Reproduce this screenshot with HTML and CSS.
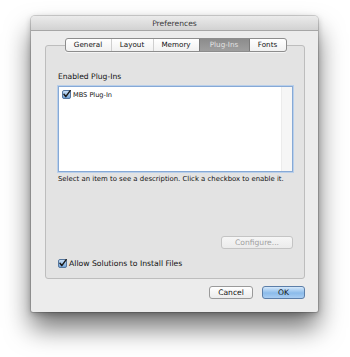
FILE: index.html
```html
<!DOCTYPE html>
<html>
<head>
<meta charset="utf-8">
<link rel="stylesheet" href="styles.css">
</head>
<body>
<div class="window">
  <div class="titlebar">Preferences</div>
  <div class="content">
    <div class="group">
      <div class="tabs">
        <div class="tab t-general">General</div>
        <div class="tab t-layout">Layout</div>
        <div class="tab t-memory">Memory</div>
        <div class="tab t-plug selected">Plug-Ins</div>
        <div class="tab t-fonts">Fonts</div>
      </div>
      <div class="label">Enabled Plug-Ins</div>
      <div class="list">
        <div class="rows">
          <div class="row">
            <svg class="cb" width="9" height="9" viewBox="0 0 9 9"><defs><linearGradient id="g1" x1="0" y1="0" x2="0" y2="1"><stop offset="0" stop-color="#cfe3f7"/><stop offset="1" stop-color="#6fa2d8"/></linearGradient></defs><rect x="0.5" y="0.5" width="8" height="8" rx="1.5" fill="url(#g1)" stroke="#56779e"/><path d="M2 4.3 L3.8 6.6 L8.2 0.6" fill="none" stroke="#1b1b1b" stroke-width="1.5" stroke-linecap="round" stroke-linejoin="round"/></svg>
            <span>MBS Plug-In</span>
          </div>
        </div>
        <div class="scroll"></div>
      </div>
      <div class="hint">Select an item to see a description. Click a checkbox to enable it.</div>
      <div class="spacer"></div>
      <div class="cfg-row"><div class="btn disabled">Configure...</div></div>
      <div class="allow">
        <svg class="cb" width="9" height="9" viewBox="0 0 9 9"><defs><linearGradient id="g2" x1="0" y1="0" x2="0" y2="1"><stop offset="0" stop-color="#cfe3f7"/><stop offset="1" stop-color="#6fa2d8"/></linearGradient></defs><rect x="0.5" y="0.5" width="8" height="8" rx="1.5" fill="url(#g2)" stroke="#56779e"/><path d="M2 4.3 L3.8 6.6 L8.2 0.6" fill="none" stroke="#1b1b1b" stroke-width="1.5" stroke-linecap="round" stroke-linejoin="round"/></svg>
        <span>Allow Solutions to Install Files</span>
      </div>
    </div>
    <div class="buttons">
      <div class="btn cancel">Cancel</div>
      <div class="btn ok">OK</div>
    </div>
  </div>
</div>
</body>
</html>
```
FILE: styles.css
```css
html, body {
  margin: 0;
  padding: 0;
  background: #ffffff;
}
body {
  width: 350px;
  height: 357px;
  padding: 16px 0 0 31px;
  box-sizing: border-box;
  font-family: "DejaVu Sans", "Liberation Sans", sans-serif;
  font-size: 6.9px;
  color: #111;
}
.window {
  width: 287px;
  height: 296px;
  border-radius: 4px 4px 2px 2px;
  box-shadow: 0 16px 26px rgba(0,0,0,0.55), 0 2px 6px rgba(0,0,0,0.25), 0 0 0 1px rgba(0,0,0,0.15);
  overflow: hidden;
  display: flex;
  flex-direction: column;
  background: #ececec;
}
.titlebar {
  height: 15px;
  flex: none;
  background: linear-gradient(#ebebeb, #d2d2d2);
  border-bottom: 1px solid #a6a6a6;
  box-sizing: border-box;
  text-align: center;
  line-height: 15px;
  font-size: 7.6px;
  color: #3a3a3a;
}
.content {
  flex: 1;
  display: flex;
  flex-direction: column;
  padding: 14px 13px 0 14px;
}
.group {
  height: 234px;
  box-sizing: border-box;
  border: 1px solid #bdbdbd;
  border-radius: 3px;
  background: #e3e3e3;
  display: flex;
  flex-direction: column;
  padding: 0 11px 0 12px;
}
.tabs {
  align-self: center;
  display: flex;
  height: 14px;
  margin-top: -8px;
  box-sizing: border-box;
  border: 1px solid #8d8d8d;
  border-radius: 3px;
  background: linear-gradient(#ffffff, #f1f1f1);
  overflow: hidden;
  box-shadow: 0 1px 0 rgba(255,255,255,0.6);
}
.tab {
  height: 12px;
  line-height: 12px;
  text-align: center;
  font-size: 7.2px;
  color: #111;
  border-left: 1px solid #cfcfcf;
}
.tab:first-child { border-left: none; }
.t-general { width: 45px; }
.t-layout { width: 41px; }
.t-memory { width: 45px; }
.t-plug { width: 49px; }
.t-fonts { width: 36px; }
.tab.selected {
  background: linear-gradient(#8c8c8c, #9e9e9e);
  color: #e2e2e2;
  border-left: 1px solid #7a7a7a;
}
.selected + .tab { border-left: 1px solid #7a7a7a; }
.label {
  margin-top: 20px;
  height: 10px;
  line-height: 10px;
  font-size: 7.6px;
  color: #111;
}
.list {
  margin-top: 4px;
  height: 86px;
  box-sizing: border-box;
  border: 1px solid #86a9d6;
  box-shadow: 0 0 0 1px #b9cfea;
  background: #ffffff;
  display: flex;
}
.rows {
  flex: 1;
  padding: 2px 3px;
}
.row {
  display: flex;
  align-items: center;
  gap: 2px;
  height: 11px;
  font-size: 6.6px;
}
.scroll {
  width: 10px;
  background: #f6f6f6;
  border-left: 1px solid #ececec;
}
.hint {
  margin-top: 2px;
  height: 10px;
  line-height: 10px;
}
.spacer { flex: 1; }
.cfg-row {
  display: flex;
  justify-content: flex-end;
}
.btn {
  height: 13px;
  box-sizing: border-box;
  border-radius: 3px;
  text-align: center;
  line-height: 11px;
  font-size: 7.6px;
}
.btn.disabled {
  width: 72px;
  border: 1px solid #c4c4c4;
  background: linear-gradient(#f6f6f6, #ebebeb);
  color: #a0a0a0;
}
.allow {
  display: flex;
  align-items: center;
  gap: 2px;
  margin-top: 9px;
  margin-bottom: 10px;
  height: 10px;
  font-size: 7.7px;
}
.buttons {
  display: flex;
  justify-content: flex-end;
  gap: 9px;
  margin-top: 7px;
}
.btn.cancel {
  width: 44px;
  border: 1px solid #9a9a9a;
  background: linear-gradient(#ffffff, #ececec);
  color: #111;
}
.btn.ok {
  width: 43px;
  border: 1px solid #5c7ea8;
  background: linear-gradient(#d4e8fb, #8bbbea 55%, #a9cdf2);
  color: #111;
}
```
